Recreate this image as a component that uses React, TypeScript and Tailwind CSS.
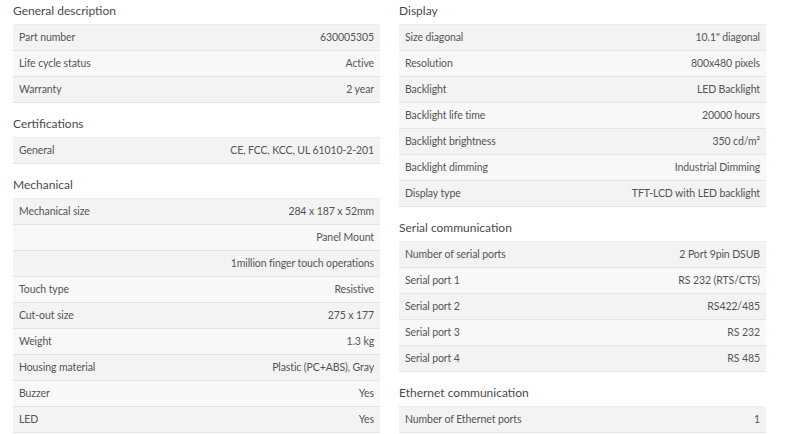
import React from 'react';

type Row = [string, string];
type Section = { title: string; rows: Row[] };

const left: Section[] = [
  {
    title: 'General description',
    rows: [
      ['Part number', '630005305'],
      ['Life cycle status', 'Active'],
      ['Warranty', '2 year'],
    ],
  },
  { title: 'Certifications', rows: [['General', 'CE, FCC, KCC, UL 61010-2-201']] },
  {
    title: 'Mechanical',
    rows: [
      ['Mechanical size', '284 x 187 x 52mm'],
      ['', 'Panel Mount'],
      ['', '1million finger touch operations'],
      ['Touch type', 'Resistive'],
      ['Cut-out size', '275 x 177'],
      ['Weight', '1.3 kg'],
      ['Housing material', 'Plastic (PC+ABS), Gray'],
      ['Buzzer', 'Yes'],
      ['LED', 'Yes'],
    ],
  },
];

const right: Section[] = [
  {
    title: 'Display',
    rows: [
      ['Size diagonal', '10.1" diagonal'],
      ['Resolution', '800x480 pixels'],
      ['Backlight', 'LED Backlight'],
      ['Backlight life time', '20000 hours'],
      ['Backlight brightness', '350 cd/m²'],
      ['Backlight dimming', 'Industrial Dimming'],
      ['Display type', 'TFT-LCD with LED backlight'],
    ],
  },
  {
    title: 'Serial communication',
    rows: [
      ['Number of serial ports', '2 Port 9pin DSUB'],
      ['Serial port 1', 'RS 232 (RTS/CTS)'],
      ['Serial port 2', 'RS422/485'],
      ['Serial port 3', 'RS 232'],
      ['Serial port 4', 'RS 485'],
    ],
  },
  { title: 'Ethernet communication', rows: [['Number of Ethernet ports', '1']] },
];

function SpecSection({ s, first }: { s: Section; first: boolean }) {
  return (
    <div className={first ? 'pt-[1px]' : 'pt-[11px]'}>
      <h3 className="h-[20px] leading-[20px] text-[12px] text-[#4a4a4a]">{s.title}</h3>
      <div className="mt-[3px] border-t border-[#ececec]">
        {s.rows.map(([k, v], i) => (
          <div
            key={i}
            className={`flex h-[26px] items-center justify-between border-b border-[#e4e4e4] px-[6px] text-[10.5px] tracking-[-0.1px] text-[#555] ${
              i % 2 === 0 ? 'bg-[#f3f3f3]' : 'bg-[#f8f8f8]'
            }`}
          >
            <span>{k}</span>
            <span>{v}</span>
          </div>
        ))}
      </div>
    </div>
  );
}

export default function App() {
  return (
    <main
      className="flex h-[434px] w-[800px] gap-[19px] overflow-hidden bg-white pl-[13px]"
      style={{ fontFamily: 'Lato, "Liberation Sans", sans-serif' }}
    >
      {[left, right].map((col, c) => (
        <div key={c} className="flex w-[367px] flex-col">
          {col.map((s, i) => (
            <SpecSection key={s.title} s={s} first={i === 0} />
          ))}
        </div>
      ))}
    </main>
  );
}
